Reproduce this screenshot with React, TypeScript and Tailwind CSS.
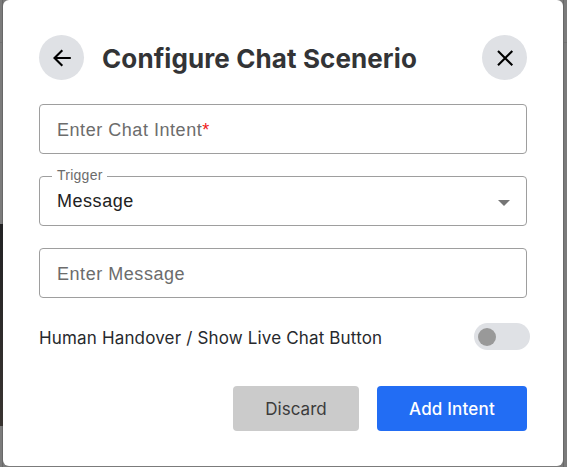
import type { ReactNode } from "react";

function RoundButton({ label, children }: { label: string; children: ReactNode }) {
  return (
    <button
      aria-label={label}
      className="flex size-[45px] shrink-0 items-center justify-center rounded-full bg-[#dfe1e5] text-black"
    >
      <svg width="24" height="24" viewBox="0 0 24 24" fill="none" stroke="currentColor" strokeWidth="2.1">
        {children}
      </svg>
    </button>
  );
}

function OutlinedField({ children }: { children: ReactNode }) {
  return (
    <div className="flex h-[50px] items-center rounded-[4px] border border-[#9e9e9e] px-[17px] font-['Liberation_Sans',sans-serif] text-[18px] tracking-[0.54px] whitespace-nowrap text-[#6c6c6c]">
      {children}
    </div>
  );
}

export default function App() {
  return (
    <div className="flex h-[467px] w-[567px] overflow-hidden bg-[#7b7b7b] font-['Inter',sans-serif]">
      <div className="flex w-[3px] shrink-0 flex-col border-r border-[#686868]">
        <div className="h-[43px] border-b border-[#707070]" />
        <div className="h-[181px]" />
        <div className="-mr-px h-[202px] bg-linear-to-b from-[#222224] to-[#393431]" />
      </div>
      <main className="flex h-[466px] w-[560px] shrink-0 flex-col rounded-[6px] bg-white px-9 pt-[35px]">
        <header className="flex h-[45px] items-center">
          <RoundButton label="Back">
            <path d="M20.8 12H4.6M12.3 4.2 4.5 12l7.8 7.8" />
          </RoundButton>
          <h1 className="ml-[18px] flex-1 pt-[2px] text-[26px] leading-8 font-bold tracking-[0.1px] whitespace-nowrap text-[#333436]">
            Configure Chat Scenerio
          </h1>
          <RoundButton label="Close">
            <path d="m5 5 14.3 14.3M19.3 5 5 19.3" />
          </RoundButton>
        </header>

        <div className="mt-6 flex flex-col gap-[22px]">
          <OutlinedField>
            <span className="pt-[3px]">
              Enter Chat Intent<span className="text-[#f01818]">*</span>
            </span>
          </OutlinedField>
          <div className="relative">
            <OutlinedField>
              <span className="flex-1 pt-px text-[#212121]">Message</span>
              <svg width="12" height="6" viewBox="0 0 12 6" className="mt-[3px] -mr-px" fill="#757575">
                <path d="M0 0h12L6 6z" />
              </svg>
            </OutlinedField>
            <span className="absolute -top-[9px] left-[13px] bg-white pr-1 pl-[5px] font-['Liberation_Sans',sans-serif] text-[14px] leading-4 tracking-[0.25px] text-[#6c6c6c]">
              Trigger
            </span>
          </div>
          <OutlinedField>
            <span className="pt-[3px]">Enter Message</span>
          </OutlinedField>
        </div>

        <div className="mt-[25px] -mr-[3px] flex h-[27px] items-center justify-between">
          <span className="pt-[3px] text-[17px] leading-6 tracking-[0.16px] whitespace-nowrap text-[#27292d]">
            Human Handover / Show Live Chat Button
          </span>
          <button
            role="switch"
            aria-checked="false"
            aria-label="Human Handover"
            className="flex h-[27px] w-14 items-center rounded-full bg-[#dfe1e5] pt-px pl-1"
          >
            <span className="size-[18px] rounded-full bg-[#999]" />
          </button>
        </div>

        <div className="mt-9 flex justify-end gap-[18px] text-[17px]">
          <button className="h-[45px] w-[126px] rounded-[4px] bg-[#cbcbcb] pt-[3px] text-[#3b3b3b]">Discard</button>
          <button className="h-[45px] w-[150px] rounded-[4px] bg-[#226df4] pt-[3px] font-medium tracking-[0.2px] text-white">
            Add Intent
          </button>
        </div>
      </main>
      <div className="w-1 shrink-0 border-l border-[#686868]">
        <div className="h-[43px] border-b border-[#707070]" />
      </div>
    </div>
  );
}
